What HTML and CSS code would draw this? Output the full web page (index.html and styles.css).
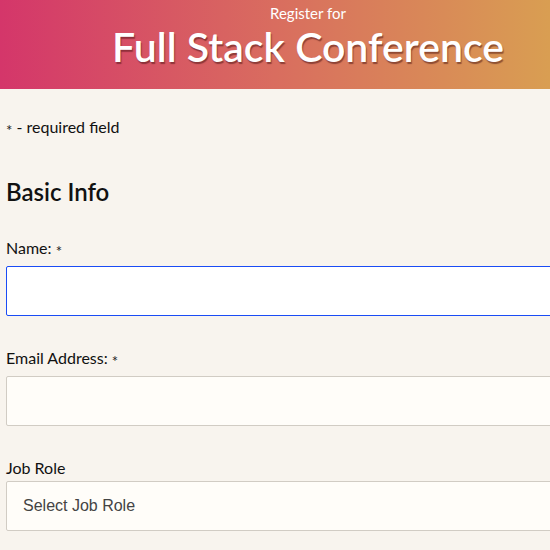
FILE: index.html
```html
<!DOCTYPE html>
<html lang="en">
<head>
<meta charset="utf-8">
<title>Register for Full Stack Conference</title>
<link rel="stylesheet" href="styles.css">
</head>
<body>
<header class="hero">
  <div class="hero-inner">
    <span class="hero-sub">Register for</span>
    <h1 class="hero-title">Full Stack Conference</h1>
  </div>
</header>
<main class="form">
  <p class="note"><span class="req">*</span> - required field</p>
  <h2 class="section-title">Basic Info</h2>
  <div class="field">
    <label class="label" for="name">Name: <span class="req">*</span></label>
    <div class="input focused" id="name"></div>
  </div>
  <div class="field">
    <label class="label" for="email">Email Address: <span class="req">*</span></label>
    <div class="input" id="email"></div>
  </div>
  <div class="field field-tight">
    <label class="label" for="role">Job Role</label>
    <div class="input select" id="role">Select Job Role</div>
  </div>
</main>
</body>
</html>
```
FILE: styles.css
```css
html, body {
  margin: 0;
  padding: 0;
}
body {
  background: #f8f4ee;
  font-family: Lato, "Noto Sans", sans-serif;
  color: #111;
  overflow: hidden;
  width: 550px;
}
.hero {
  height: 89px;
  background: linear-gradient(90deg, #d4366a 0%, #d96d5f 50%, #d99e52 100%);
  color: #fff;
  display: flex;
  justify-content: center;
  padding-left: 66px;
  box-sizing: border-box;
}
.hero-inner {
  display: flex;
  flex-direction: column;
  align-items: center;
  padding-top: 4px;
}
.hero-sub {
  font-size: 15px;
  line-height: 18px;
}
.hero-title {
  margin: 0;
  font-size: 41px;
  font-weight: 600;
  line-height: 50px;
  text-shadow: 1px 2px 1px rgba(70, 15, 15, 0.5);
  white-space: nowrap;
}
.form {
  display: flex;
  flex-direction: column;
  padding-left: 6px;
}
.note {
  margin: 28px 0 0;
  font-size: 16px;
  line-height: 20px;
}
.req {
  display: inline-block;
  font-size: 15px;
  color: #222;
  transform: translateY(3px);
}
.section-title {
  margin: 40px 0 0;
  font-size: 24px;
  font-weight: 600;
  line-height: 30px;
}
.field {
  display: flex;
  flex-direction: column;
  margin-top: 32px;
}
.field:first-of-type {
  margin-top: 31px;
}
.label {
  font-size: 16px;
  line-height: 20px;
  margin-bottom: 8px;
}
.input {
  width: 600px;
  height: 50px;
  box-sizing: border-box;
  border: 1px solid #d1ccc4;
  border-radius: 2px;
  background: #fffdf9;
}
.focused {
  border-color: #1a4cf5;
  background: #fff;
}
.select {
  display: flex;
  align-items: center;
  padding-left: 16px;
  font-family: "Liberation Sans", Arial, sans-serif;
  font-size: 16px;
  color: #444;
}
.field-tight {
  margin-top: 32px;
}
.field-tight .label {
  margin-bottom: 3px;
}
```
